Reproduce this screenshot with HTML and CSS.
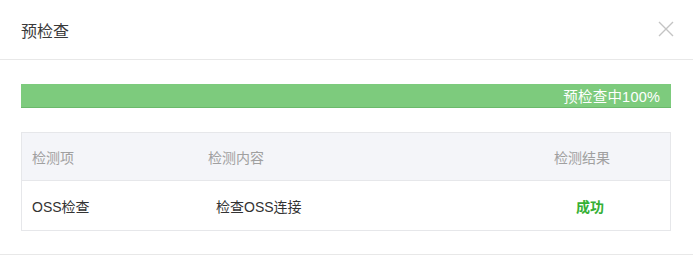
FILE: index.html
```html
<!DOCTYPE html>
<html lang="zh">
<head>
<meta charset="utf-8">
<link rel="stylesheet" href="styles.css">
</head>
<body>
<div class="dialog">
  <div class="dlg-header">
    <span class="dlg-title">预检查</span>
    <span class="dlg-close">
      <svg width="16" height="16" viewBox="0 0 16 16"><path d="M1 1 L15 15 M15 1 L1 15" stroke="#c4c4c4" stroke-width="1.4" fill="none"/></svg>
    </span>
  </div>
  <div class="dlg-body">
    <div class="progress"><span class="progress-text">预检查中100%</span></div>
    <div class="table">
      <div class="row head">
        <div class="cell c1">检测项</div>
        <div class="cell c2">检测内容</div>
        <div class="cell c3">检测结果</div>
      </div>
      <div class="row data">
        <div class="cell c1">OSS检查</div>
        <div class="cell c2 body2">检查OSS连接</div>
        <div class="cell c3 body3"><span class="ok">成功</span></div>
      </div>
    </div>
  </div>
  <div class="dlg-footer"></div>
</div>
</body>
</html>
```

FILE: styles.css
```css
html, body {
  margin: 0;
  padding: 0;
  background: #fff;
  font-family: "Liberation Sans", "Noto Sans CJK SC", sans-serif;
}
.dialog {
  width: 693px;
}
.dlg-header {
  height: 59px;
  border-bottom: 1px solid #e8e8e8;
  display: flex;
  align-items: center;
  justify-content: space-between;
  padding: 0 19px 0 21px;
}
.dlg-title {
  font-size: 16px;
  color: #3a3a3a;
}
.dlg-close {
  display: flex;
  margin-top: -2px;
}
.dlg-body {
  padding: 24px 22px 23px 21px;
  border-bottom: 1px solid #e8e8e8;
}
.progress {
  height: 23px;
  background: #7dcb7d;
  border-bottom: 1px solid #6bb96b;
  display: flex;
  align-items: center;
  justify-content: flex-end;
  padding-right: 11px;
}
.progress-text {
  color: #fff;
  font-size: 14.5px;
  letter-spacing: 0.2px;
}
.table {
  margin-top: 24px;
  border: 1px solid #e6e7ea;
}
.row {
  display: grid;
  grid-template-columns: 175px 346px 127px;
  align-items: center;
}
.row.head {
  height: 47px;
  background: #f4f5f9;
  border-bottom: 1px solid #e6e7ea;
  color: #a0a0a0;
  font-size: 14px;
}
.row.data {
  height: 49px;
  color: #333;
  font-size: 14px;
}
.cell.c1 { padding-left: 10px; }
.cell.c2 { padding-left: 11px; }
.cell.c3 { padding-left: 11px; }
.cell.body2 { padding-left: 19px; }
.cell.body3 { padding-left: 33px; }
.ok {
  color: #35b035;
  font-weight: bold;
}
.dlg-footer {
  height: 18px;
}
```
